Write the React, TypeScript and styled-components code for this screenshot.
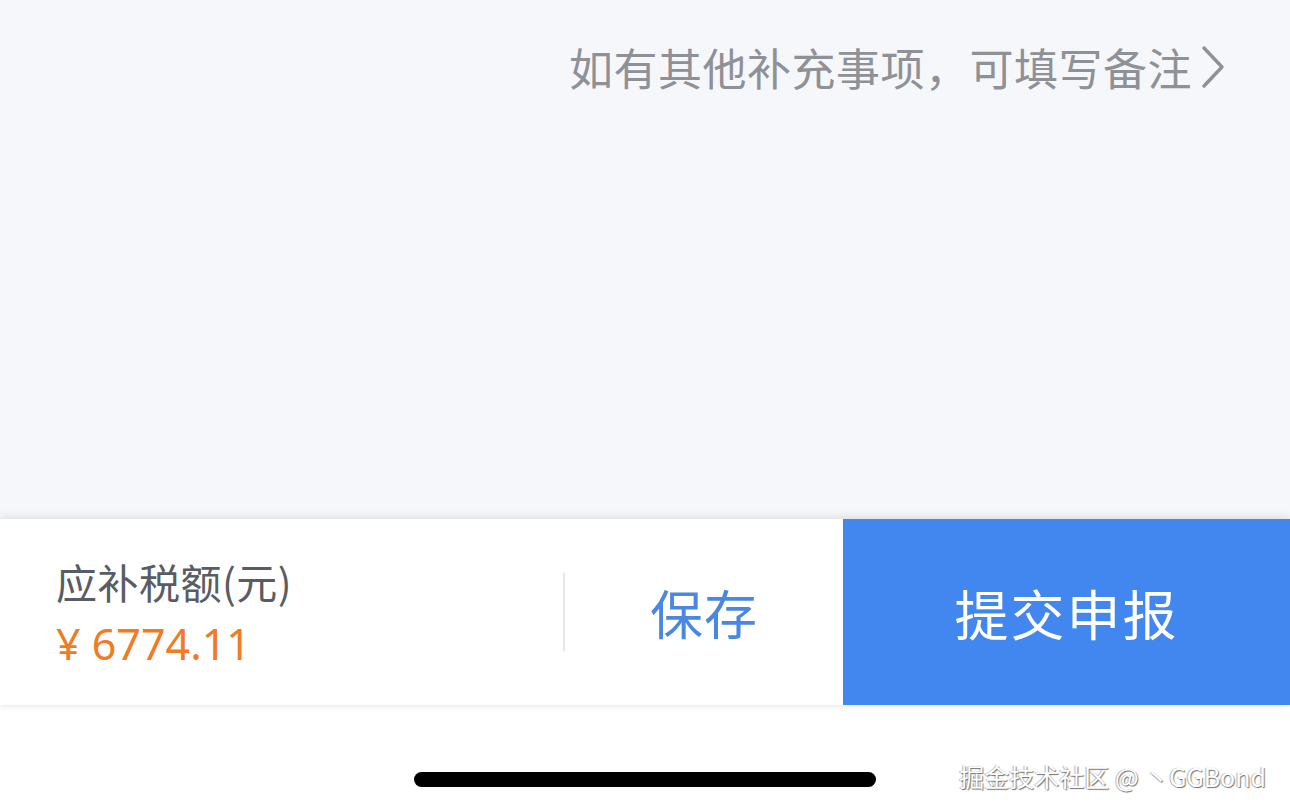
import React from 'react';
import styled, { createGlobalStyle } from 'styled-components';

const GlobalStyle = createGlobalStyle`
  html, body {
    margin: 0;
    padding: 0;
    background: #ffffff;
  }
  body {
    font-family: "Noto Sans CJK SC", "Noto Sans", sans-serif;
  }
`;

const Page = styled.div`
  position: relative;
  width: 1290px;
  height: 812px;
  display: flex;
  flex-direction: column;
  overflow: hidden;
`;

const Content = styled.div`
  height: 519px;
  background: #f6f7fa;
  display: flex;
  justify-content: flex-end;
  align-items: flex-start;
  padding: 36px 64px 0 0;
  box-sizing: border-box;
`;

const RemarkLink = styled.div`
  display: flex;
  align-items: center;
  gap: 8px;
  color: #8f9196;
  font-size: 44px;
  line-height: 62px;
  letter-spacing: 0.5px;
`;

const ActionBar = styled.div`
  height: 186px;
  display: flex;
  background: #ffffff;
  box-shadow: 0 -3px 8px rgba(0, 0, 0, 0.08), 0 2px 6px rgba(0, 0, 0, 0.07);
  position: relative;
  z-index: 1;
`;

const Summary = styled.div`
  width: 563px;
  padding: 37px 0 0 56px;
  box-sizing: border-box;
  display: flex;
  flex-direction: column;
`;

const SummaryLabel = styled.div`
  color: #585c63;
  font-size: 41px;
  line-height: 50px;
  letter-spacing: 0.5px;
`;

const Amount = styled.div`
  color: #f07b22;
  font-family: "Noto Sans", "Noto Sans CJK SC", sans-serif;
  font-size: 43px;
  line-height: 60px;
  margin-top: 8px;
`;

const Divider = styled.div`
  align-self: center;
  width: 2px;
  height: 78px;
  background: #e4e5e8;
`;

const BarButton = styled.button<{ $primary?: boolean }>`
  border: none;
  margin: 0;
  padding: 0;
  cursor: pointer;
  display: flex;
  align-items: center;
  justify-content: center;
  font-family: "Noto Sans CJK SC", sans-serif;
  font-size: ${(p) => (p.$primary ? '54px' : '53px')};
  letter-spacing: ${(p) => (p.$primary ? '2px' : '1px')};
  background: ${(p) => (p.$primary ? '#4287ef' : '#ffffff')};
  color: ${(p) => (p.$primary ? '#ffffff' : '#4a87e2')};
  width: ${(p) => (p.$primary ? '447px' : 'auto')};
  flex: ${(p) => (p.$primary ? 'none' : '1')};
`;

const Footer = styled.div`
  flex: 1;
  background: #ffffff;
  display: flex;
  justify-content: center;
  padding-top: 67px;
  box-sizing: border-box;
`;

const HomeIndicator = styled.div`
  width: 462px;
  height: 15px;
  border-radius: 8px;
  background: #000000;
`;

const Watermark = styled.div`
  position: absolute;
  right: 24px;
  bottom: 20px;
  color: #ffffff;
  font-size: 25px;
  line-height: 32px;
  text-shadow: 1px 1px 1px rgba(0, 0, 0, 0.55), -1px 0 1px rgba(0, 0, 0, 0.3);
`;

const Chevron = () => (
  <svg width="26" height="44" viewBox="0 0 26 44" fill="none">
    <path d="M4 3 L22 22 L4 41" stroke="#8f9196" strokeWidth="3.4" strokeLinecap="round" strokeLinejoin="round" />
  </svg>
);

export default function App() {
  return (
    <Page>
      <GlobalStyle />
      <Content>
        <RemarkLink>
          <span>如有其他补充事项，可填写备注</span>
          <Chevron />
        </RemarkLink>
      </Content>
      <ActionBar>
        <Summary>
          <SummaryLabel>应补税额(元)</SummaryLabel>
          <Amount>¥ 6774.11</Amount>
        </Summary>
        <Divider />
        <BarButton>保存</BarButton>
        <BarButton $primary>提交申报</BarButton>
      </ActionBar>
      <Footer>
        <HomeIndicator />
      </Footer>
      <Watermark>掘金技术社区 @ 丶GGBond</Watermark>
    </Page>
  );
}
